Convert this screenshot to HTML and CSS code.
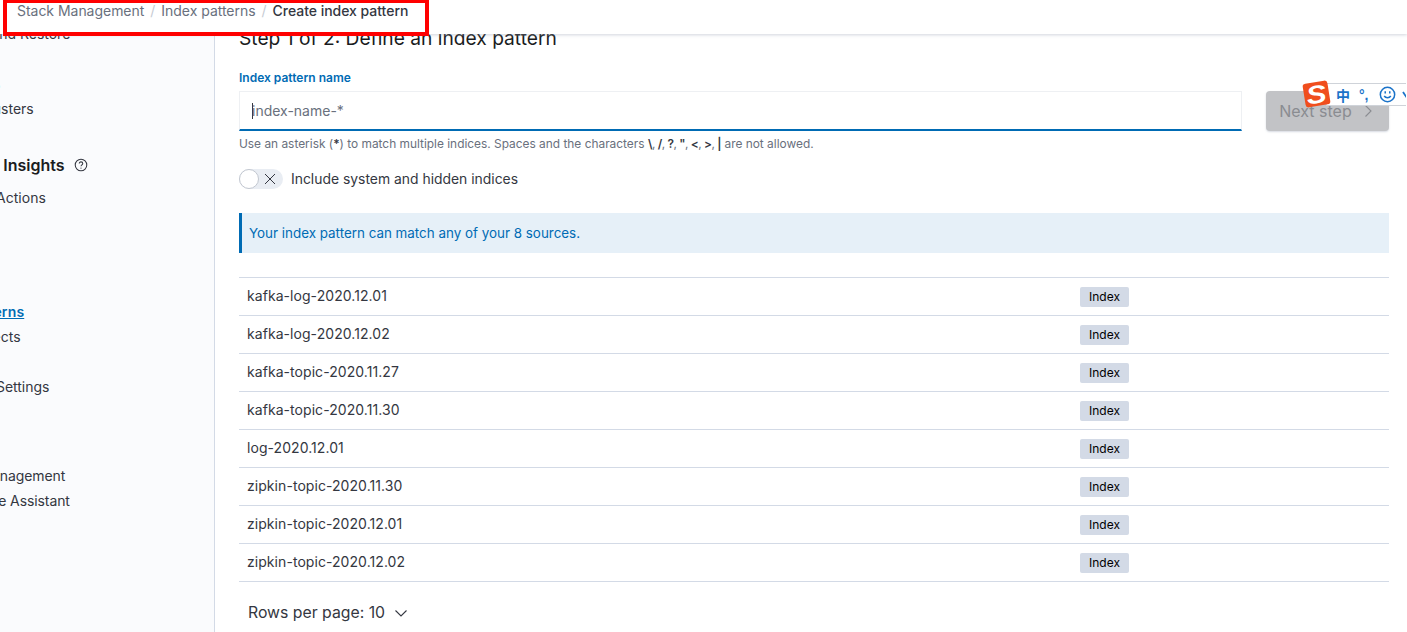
FILE: index.html
```html
<!DOCTYPE html>
<html lang="en">
<head>
<meta charset="utf-8">
<title>Create index pattern</title>
<link rel="stylesheet" href="styles.css">
</head>
<body>
<header class="topbar">
  <nav class="crumbs">
    <span class="crumb">Stack Management</span><span class="sep">/</span>
    <span class="crumb">Index patterns</span><span class="sep">/</span>
    <span class="crumb current">Create index pattern</span>
  </nav>
</header>
<div class="redbox"></div>
<div class="app">
  <aside class="side">
    <div class="side-inner">
      <a class="item first">Snapshot and Restore</a>
      <a class="item rollup">Rollup Jobs</a>
      <a class="item">Transforms</a>
      <a class="item">Remote Clusters</a>
      <h3 class="side-title">Alerts and Insights
        <svg class="help" viewBox="0 0 16 16" width="14" height="14" fill="none" stroke="#343741" stroke-width="1.2"><circle cx="8" cy="8" r="6.6"/><path d="M6 6.4c0-1.2.9-2 2-2s2 .8 2 1.9c0 1.5-2 1.6-2 3.2" stroke-width="1.2"/><circle cx="8" cy="11.5" r=".7" fill="#343741" stroke="none"/></svg>
      </h3>
      <a class="item">Alerts and Actions</a>
      <a class="item">Reporting</a>
      <h3 class="side-title kibana">Kibana</h3>
      <a class="item active">Index Patterns</a>
      <a class="item">Saved Objects</a>
      <a class="item">Spaces</a>
      <a class="item">Advanced Settings</a>
      <h3 class="side-title stack">Stack</h3>
      <a class="item tight">License Management</a>
      <a class="item tight">8.0 Upgrade Assistant</a>
    </div>
  </aside>
  <main class="main">
    <h1 class="step">Step 1 of 2: Define an index pattern</h1>
    <div class="form-row">
      <div class="field">
        <label class="label">Index pattern name</label>
        <div class="input"><span class="caret"></span><span class="placeholder">index-name-*</span></div>
        <p class="hint">Use an asterisk (<b>*</b>) to match multiple indices. Spaces and the characters <span class="chars"><b>\</b>, <b>/</b>, <b>?</b>, <b>"</b>, <b>&lt;</b>, <b>&gt;</b>, <b>|</b></span> are not allowed.</p>
      </div>
      <button class="next">Next step
        <svg viewBox="0 0 16 16" width="16" height="16" fill="none" stroke="#8a8c91" stroke-width="1.1"><path d="M5.5 2.5 11 8l-5.5 5.5"/></svg>
      </button>
    </div>
    <div class="toggle-row">
      <span class="toggle"><span class="knob"></span>
        <svg viewBox="0 0 12 12" width="12" height="12" fill="none" stroke="#343741" stroke-width="1"><path d="M1 1l10 10M11 1 1 11"/></svg>
      </span>
      <span class="toggle-label">Include system and hidden indices</span>
    </div>
    <div class="callout">Your index pattern can match any of your 8 sources.</div>
    <div class="table">
      <div class="row"><span class="name">kafka-log-2020.12.01</span><span class="badge">Index</span></div>
      <div class="row"><span class="name">kafka-log-2020.12.02</span><span class="badge">Index</span></div>
      <div class="row"><span class="name">kafka-topic-2020.11.27</span><span class="badge">Index</span></div>
      <div class="row"><span class="name">kafka-topic-2020.11.30</span><span class="badge">Index</span></div>
      <div class="row"><span class="name">log-2020.12.01</span><span class="badge">Index</span></div>
      <div class="row"><span class="name">zipkin-topic-2020.11.30</span><span class="badge">Index</span></div>
      <div class="row"><span class="name">zipkin-topic-2020.12.01</span><span class="badge">Index</span></div>
      <div class="row"><span class="name">zipkin-topic-2020.12.02</span><span class="badge">Index</span></div>
    </div>
    <div class="pager">Rows per page: 10
      <svg viewBox="0 0 16 16" width="16" height="16" fill="none" stroke="#343741" stroke-width="1.1"><path d="M2.5 5.5 8 11l5.5-5.5"/></svg>
    </div>
  </main>
</div>
<div class="ime">
  <div class="ime-logo"><span>S</span></div>
  <div class="ime-bar">
    <span class="ime-zh">中</span>
    <span class="ime-punc">°,</span>
    <svg class="ime-smile" viewBox="0 0 18 18" width="17" height="17" fill="none" stroke="#1b73c9" stroke-width="1.6"><circle cx="9" cy="9" r="7.6"/><path d="M5.5 10.6c1.6 2.5 5.4 2.5 7 0"/><path d="M6.6 5.6v2.4M11.4 5.6v2.4"/></svg>
    <svg class="ime-cut" viewBox="0 0 10 10" width="10" height="10" fill="none" stroke="#1b73c9" stroke-width="1.8"><path d="M1 2l4 6 4-6"/></svg>
  </div>
</div>
</body>
</html>
```

FILE: styles.css
```css
* { box-sizing: border-box; }
html, body { margin: 0; height: 632px; overflow: hidden; background: #fff; }
body { font-family: Inter, "Liberation Sans", sans-serif; font-size: 14px; color: #343741; }

.topbar {
  position: absolute; top: 0; left: 0; right: 0; height: 34px; z-index: 5;
  background: #fff; box-shadow: 0 1px 3px rgba(152, 162, 179, .45);
}
.crumbs { display: flex; align-items: center; height: 20px; padding-left: 17px; font-size: 14px; color: #69707d; }
.crumb { white-space: nowrap; letter-spacing: -.03px; }
.sep { margin: 0 6px; color: #c6cbd3; }
.current { color: #343741; font-weight: 500; }
.redbox {
  position: absolute; left: 3px; top: -1px; width: 426px; height: 37px; z-index: 6;
  border: 4px solid #f00;
}

.app { display: flex; height: 632px; }
.side { width: 215px; flex: none; background: #fafbfd; border-right: 1px solid #d3dae6; overflow: hidden; }
.side-inner { margin-left: -75px; padding-top: 21px; white-space: nowrap; }
.item { display: block; height: 25.1px; line-height: 25px; }
.rollup { letter-spacing: -.3px; }
.tight { letter-spacing: -.09px; }
.active { color: #006bb4; font-weight: 600; letter-spacing: .15px; text-decoration: underline; }
.side-title { margin: 33px 0 9px -5px; height: 22px; line-height: 22px; font-size: 16px; font-weight: 600; color: #1a1c21; display: flex; align-items: center; gap: 9px; }
.kibana { margin: 33px 0 8px; }
.stack { margin: 34px 0 8px; }
.help { flex: none; }

.main { flex: 1; min-width: 0; padding: 26px 18px 0 24px; }
.step { margin: 0; font-size: 19.2px; font-weight: 400; line-height: 24px; color: #1a1c21; }
.form-row { display: flex; gap: 24px; margin-top: 20px; }
.field { flex: 1; min-width: 0; }
.label { display: block; height: 16px; line-height: 16px; font-size: 12px; font-weight: 600; color: #006bb4; }
.input {
  display: flex; align-items: center; height: 40px; margin-top: 5px; padding-left: 12px;
  border: 1px solid #eef0f3; border-bottom: 2px solid #006bb4; background: #fff; position: relative;
}
.placeholder { color: #69707d; }
.caret { width: 1px; height: 16px; background: #343741; margin-right: -1px; }
.hint { margin: 6px 0 0; font-size: 11.9px; line-height: 14px; color: #69707d; }
.hint b { color: #343741; font-weight: 600; }
.chars { letter-spacing: -.5px; }
.next {
  flex: none; width: 123px; height: 40px; margin-top: 21px; padding: 0;
  border: 0; border-radius: 4px; background: #c2c3c6;
  display: flex; align-items: center; justify-content: center; gap: 8px;
  font: 400 16px Inter, "Liberation Sans", sans-serif; color: #8a8c91;
  box-shadow: 0 1px 2px rgba(152, 162, 179, .4);
}
.toggle-row { display: flex; align-items: center; gap: 8px; margin-top: 18px; height: 20px; }
.toggle {
  position: relative; display: flex; align-items: center; justify-content: flex-end;
  width: 44px; height: 20px; padding-right: 7px; border-radius: 10px; background: #e9edf3;
}
.knob {
  position: absolute; left: 0; top: 0; width: 20px; height: 20px; border-radius: 50%;
  background: #fff; border: 1px solid #c2c7d0;
}
.toggle-label { font-size: 13.9px; }
.callout {
  margin-top: 24px; height: 40px; padding-left: 7px; line-height: 40px; font-size: 13.4px;
  background: #e6f0f8; border-left: 3px solid #006bb4; color: #006bb4;
}
.table { margin-top: 24px; border-top: 1px solid #d3dae6; }
.row { display: flex; align-items: center; height: 38px; border-bottom: 1px solid #d3dae6; }
.name { width: 841px; flex: none; padding: 0 0 2px 8px; letter-spacing: .06px; }
.badge {
  width: 49px; height: 20px; line-height: 20px; text-align: center; border-radius: 2px;
  background: #d3dae6; font-size: 12px; color: #000;
}
.pager { display: flex; align-items: center; gap: 8px; margin-top: 21px; padding-left: 9px; font-size: 15.8px; line-height: 20px; }

.ime { position: absolute; left: 1304px; top: 80px; display: flex; align-items: flex-start; z-index: 7; }
.ime-logo {
  position: relative; z-index: 1; flex: none; width: 25px; height: 24px; border-radius: 3px; transform: rotate(-9deg);
  background: #f04e1d; display: flex; align-items: center; justify-content: center; margin-top: 2px;
}
.ime-logo span { font: italic 700 25px/24px "Liberation Sans", sans-serif; color: #fff; transform: scaleX(1.2); }
.ime-bar {
  width: 80px; height: 23px; margin: 3px 0 0 -3px; padding-left: 9px;
  background: #fff; border: 1px solid #cfd3d9; border-right: 0;
  display: flex; align-items: center; color: #1b73c9; overflow: hidden;
}
.ime-zh { flex: none; font: 700 14px "Noto Sans CJK SC", sans-serif; }
.ime-punc { flex: none; font: 700 14px "Liberation Sans", sans-serif; width: 29px; padding-left: 9px; }
.ime-smile { flex: none; }
.ime-cut { flex: none; margin-left: 6px; }
```
